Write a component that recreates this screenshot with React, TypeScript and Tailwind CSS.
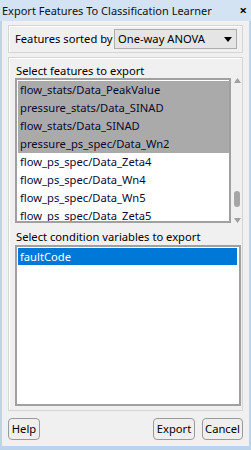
import React from "react";

const font = { fontFamily: '"Noto Sans", "Open Sans", sans-serif' };

const features = [
  { t: "flow_stats/Data_PeakValue", sel: true },
  { t: "pressure_stats/Data_SINAD", sel: true },
  { t: "flow_stats/Data_SINAD", sel: true },
  { t: "pressure_ps_spec/Data_Wn2", sel: true },
  { t: "flow_ps_spec/Data_Zeta4", sel: false },
  { t: "flow_ps_spec/Data_Wn4", sel: false },
  { t: "flow_ps_spec/Data_Wn5", sel: false },
  { t: "flow_ps_spec/Data_Zeta5", sel: false },
];

export default function App() {
  return (
    <div
      className="w-[251px] h-[450px] bg-[#f0f0f0] flex flex-col overflow-hidden text-[11.2px] text-black leading-none whitespace-nowrap"
      style={font}
    >
      {/* Title bar */}
      <div className="h-[21px] bg-[#d3e3f4] flex items-center justify-between pl-[2px] pr-[4px] shrink-0">
        <span className="text-[11px] text-[#111]">Export Features To Classification Learner</span>
        <span className="text-[13px] text-black font-bold">×</span>
      </div>
      <div className="flex-1 flex flex-col border-l-[2px] border-r-[2px] border-b-[4px] border-[#bcd3ec] px-[6px]">
        {/* Panel 1 */}
        <div className="mt-[4px] h-[28px] border border-[#d5d5d5] shadow-[inset_1px_1px_0_#fff] flex items-center justify-between pl-[6px] pr-[5px]">
          <span>Features sorted by</span>
          <div className="w-[123px] h-[20px] bg-[#e5e5e5] border border-[#adadad] flex items-center justify-between pl-[3px] pr-[4px]">
            <span>One-way ANOVA</span>
            <svg width="8" height="5" viewBox="0 0 8 5">
              <path d="M0 0h8L4 5z" fill="#000" />
            </svg>
          </div>
        </div>
        {/* Panel 2 */}
        <div className="mt-[4px] h-[354px] border border-[#d5d5d5] shadow-[inset_1px_1px_0_#fff] flex flex-col pl-[6px] pr-[1px]">
          <div className="h-[20px] flex items-end pl-[1px] pb-[2px]">Select features to export</div>
          <div className="flex h-[145px]">
            <div className="w-[216px] h-[145px] border-2 border-[#a0a0a0] bg-white pl-[1px] pt-[1px] overflow-hidden">
              {features.map((f) => (
                <div
                  key={f.t}
                  className={`h-[18px] flex items-center pl-[2px] text-[#0a0a30] ${f.sel ? "bg-[#aaaaaa]" : ""}`}
                >
                  {f.t}
                </div>
              ))}
            </div>
            <div className="flex-1 relative">
              <svg className="absolute left-[3px] top-[0px]" width="7" height="5" viewBox="0 0 7 5">
                <path d="M3.5 0L7 5H0z" fill="#a0a0a0" />
              </svg>
              <div className="absolute left-[3px] top-[113px] w-[6px] h-[16px] rounded-[3px] bg-[#a6a6a6]" />
              <svg className="absolute left-[3px] top-[140px]" width="7" height="5" viewBox="0 0 7 5">
                <path d="M0 0h7L3.5 5z" fill="#a0a0a0" />
              </svg>
            </div>
          </div>
          <div className="h-[22px] flex items-end pl-[1px] pb-[3px]">Select condition variables to export</div>
          <div className="w-[226px] h-[161px] border-2 border-[#a0a0a0] bg-white pl-[1px] pt-[1px] pr-[2px]">
            <div className="h-[17px] bg-[#0078d7] text-white flex items-center pl-[2px]">faultCode</div>
          </div>
        </div>
        {/* Buttons */}
        <div className="mt-[7px] flex items-center">
          <button className="w-[32px] h-[22px] rounded-[4px] border border-[#9a9a9a] bg-[#efefef]">Help</button>
          <div className="flex-1" />
          <button className="w-[42px] h-[22px] rounded-[4px] border border-[#9a9a9a] bg-[#efefef]">Export</button>
          <button className="ml-[7px] w-[41px] h-[22px] rounded-[4px] border border-[#9a9a9a] bg-[#efefef]">Cancel</button>
        </div>
      </div>
    </div>
  );
}
